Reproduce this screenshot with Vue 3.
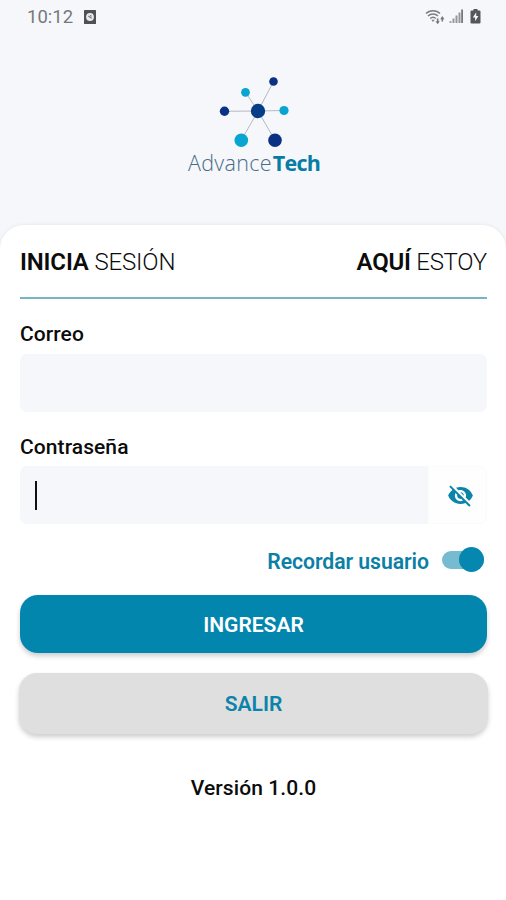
<template>
  <div class="screen">
    <header class="status-bar">
      <div class="status-left">
        <span class="clock">10:12</span>
        <svg class="app-icon" width="12" height="14" viewBox="0 0 12 14">
          <rect width="12" height="14" rx="0.5" fill="#505154" />
          <circle cx="6" cy="7" r="3.9" fill="#e9eaee" />
          <path d="M4.3 6l3.4 2.2M6.2 5.2l1.3 1.2" stroke="#77787b" stroke-width="1.1" />
        </svg>
      </div>
      <div class="status-right">
        <svg width="20" height="16" viewBox="0 0 20 16" fill="none" stroke="#7c7d80" stroke-width="1.5">
          <path d="M1 4.500C4.500 0.700 11.500 0.700 15 4.500" />
          <path d="M3 7C5.700 4.400 10.300 4.400 13 7" />
          <path d="M5.200 9.500c1.600-1.500 4-1.500 5.600 0" />
          <path d="M6.300 10.800h3.400L8 13z" fill="#7c7d80" stroke="none" />
          <path d="M11.900 9.500h1.600v2.700h1.300L12.700 15.300l-2.200-3.100h1.400zM16.500 12.500V10.300h-1.300l2.100-3.300 2.200 3.300h-1.400v2.200z" fill="#77787b" stroke="none" />
        </svg>
        <svg width="15" height="15" viewBox="0 0 15 15">
          <path d="M0.500 12h2v2h-2z" fill="#a4a5a8" />
          <path d="M3.500 9.500h2V14h-2zM6.500 6.500h2V14h-2zM9.500 3.500h2V14h-2z" fill="#97989b" />
          <path d="M12.200 0.500h1.800V14h-1.800z" fill="#77787b" />
        </svg>
        <svg width="11" height="15" viewBox="0 0 11 15">
          <path d="M3.500 0h4v1.500h2q1 0 1 1v11q0 1-1 1h-8q-1 0-1-1v-11q0-1 1-1h2z" fill="#55565a" />
          <path d="M6.200 3.200L2.800 8.500h2.300v3.700L8.400 7H6.200z" fill="#f4f6fb" />
        </svg>
      </div>
    </header>

    <div class="brand">
      <svg class="brand-mark" width="72" height="74" viewBox="0 0 72 74">
        <line
          v-for="node in nodes"
          :key="node.id"
          x1="39"
          y1="36"
          :x2="node.x"
          :y2="node.y"
          stroke="#b6b9c5"
          stroke-width="1"
        />
        <circle v-for="node in nodes" :key="node.id" :cx="node.x" :cy="node.y" :r="node.r" :fill="node.color" />
        <circle cx="39" cy="36" r="7.200" fill="#053d87" />
      </svg>
      <div class="brand-name">Advance<b>Tech</b></div>
    </div>

    <main class="card">
      <div class="tabs">
        <span class="tab tab-login"><b>INICIA</b> SESIÓN</span>
        <span class="tab tab-here"><b>AQUÍ</b> ESTOY</span>
      </div>

      <label class="label label-email" for="email">Correo</label>
      <input id="email" v-model="email" class="input" type="email" />

      <label class="label label-password" for="password">Contraseña</label>
      <div class="password">
        <input id="password" v-model="password" class="input" :type="showPassword ? 'text' : 'password'" />
        <span v-if="!password" class="caret"></span>
        <button class="eye" type="button" @click="showPassword = !showPassword">
          <svg width="27" height="27" viewBox="0 0 24 24" fill="#0a84a9">
            <path
              d="M12 7c2.760 0 5 2.240 5 5 0 .65-.13 1.260-.36 1.830l2.920 2.920c1.510-1.260 2.700-2.890 3.430-4.750-1.730-4.390-6-7.500-11-7.500-1.400 0-2.740.25-3.980.7l2.160 2.160C10.740 7.130 11.350 7 12 7zM2 4.270l2.280 2.280.46.46C3.080 8.300 1.780 10.020 1 12c1.730 4.390 6 7.500 11 7.500 1.550 0 3.030-.3 4.380-.84l.42.42L19.730 22 21 20.730 3.270 3 2 4.270zM7.530 9.800l1.550 1.550c-.05.21-.08.43-.08.65 0 1.660 1.340 3 3 3 .22 0 .44-.03.65-.08l1.550 1.550c-.67.33-1.410.53-2.200.53-2.760 0-5-2.240-5-5 0-.79.2-1.530.53-2.200zm4.310-.78l3.150 3.150.02-.16c0-1.660-1.340-3-3-3l-.17.010z"
            />
          </svg>
        </button>
      </div>

      <div class="remember">
        <span class="remember-text">Recordar usuario</span>
        <button class="switch" :class="{ on: remember }" type="button" @click="remember = !remember">
          <span class="thumb"></span>
        </button>
      </div>

      <button class="btn btn-primary" type="button">INGRESAR</button>
      <button class="btn btn-exit" type="button">SALIR</button>

      <p class="version">Versión 1.0.0</p>
    </main>
  </div>
</template>

<script setup>
import { ref } from "vue";

const email = ref("");
const password = ref("");
const showPassword = ref(false);
const remember = ref(true);

const nodes = [
  { id: 1, x: 54.5, y: 6.5, r: 4.3, color: "#0a3183" },
  { id: 2, x: 26.5, y: 17.3, r: 4.4, color: "#08a5d0" },
  { id: 3, x: 5.5, y: 36.3, r: 4.7, color: "#0a3183" },
  { id: 4, x: 65, y: 35.5, r: 4.6, color: "#08a5d0" },
  { id: 5, x: 22.3, y: 65.3, r: 6.8, color: "#08a5d0" },
  { id: 6, x: 56, y: 65.3, r: 6.8, color: "#0a3183" },
];
</script>

<style>
body {
  margin: 0;
}
</style>

<style scoped>
.screen {
  display: flex;
  flex-direction: column;
  height: 900px;
  background: #f5f7fb;
  color: #0c0c0c;
  font-family: Roboto, "Liberation Sans", sans-serif;
  overflow: hidden;
}

button {
  padding: 0;
  border: none;
  font-family: inherit;
}

/* Status bar */
.status-bar {
  display: flex;
  justify-content: space-between;
  align-items: center;
  height: 33px;
  padding: 0 25px 0 27px;
  box-sizing: border-box;
}

.status-left {
  display: flex;
  align-items: center;
  gap: 11px;
}

.clock {
  padding-top: 1px;
  font-size: 18.5px;
  line-height: 32px;
  color: #77787b;
}

.status-right {
  display: flex;
  align-items: center;
  gap: 4px;
}

.status-right svg:last-child {
  margin-left: 2px;
}

/* Logo */
.brand {
  display: flex;
  flex-direction: column;
  align-items: center;
  height: 192px;
  padding-top: 42px;
  box-sizing: border-box;
}

.brand-mark {
  margin-left: 4px;
}

.brand-name {
  margin: 0 0 0 2px;
  font-family: "Open Sans", sans-serif;
  font-size: 21.5px;
  font-weight: 300;
  line-height: 28px;
  letter-spacing: 0.3px;
  color: #4a6b86;
  white-space: nowrap;
}

.brand-name b {
  margin-left: 1px;
  font-weight: 700;
  letter-spacing: -0.8px;
  color: #087da3;
}

/* Login card */
.card {
  display: flex;
  flex: 1;
  flex-direction: column;
  padding: 0 19px 0 20px;
  border-radius: 24px 24px 0 0;
  background: #fff;
  box-shadow: 0 0 4px rgba(0, 0, 0, 0.08);
}

.tabs {
  display: flex;
  justify-content: space-between;
  height: 74px;
  padding-top: 22px;
  box-sizing: border-box;
  border-bottom: 2px solid #79b4c5;
}

.tab {
  font-size: 24px;
  font-weight: 300;
  line-height: 30px;
  white-space: nowrap;
}

.tab b {
  font-weight: 600;
}

.tab-login {
  letter-spacing: -0.15px;
}

.tab-here {
  letter-spacing: -0.25px;
}

.label {
  font-size: 21px;
  font-weight: 550;
  line-height: 26px;
  letter-spacing: 0.08px;
}

.label-email {
  margin: 22px 0 7px;
}

.label-password {
  margin: 22px 0 6px;
}

.input {
  width: 100%;
  height: 58px;
  padding: 0 15px;
  box-sizing: border-box;
  border: none;
  border-radius: 7px;
  outline: none;
  background: #f5f7fb;
  font-family: inherit;
  font-size: 21px;
}

.password {
  position: relative;
  display: flex;
  height: 58px;
}

.password .input {
  flex: 1;
  width: auto;
  border-radius: 7px 0 0 7px;
}

.caret {
  position: absolute;
  top: 15px;
  left: 15px;
  width: 2px;
  height: 29px;
  background: #111;
}

.eye {
  display: flex;
  align-items: center;
  justify-content: center;
  width: 59px;
  padding-left: 5px;
  border: 1px solid #fafbfc;
  border-radius: 0 7px 7px 0;
  background: #fefefe;
}

.remember {
  display: flex;
  align-items: center;
  justify-content: flex-end;
  gap: 13px;
  height: 71px;
  padding-right: 3px;
  font-size: 21.2px;
  font-weight: 600;
  color: #0b7fa5;
}

.remember-text {
  padding-top: 3px;
  letter-spacing: -0.05px;
}

.switch {
  display: flex;
  align-items: center;
  width: 42px;
  height: 18px;
  border-radius: 9px;
  background: #c4c8cc;
}

.switch.on {
  justify-content: flex-end;
  background: #76bbcf;
}

.thumb {
  width: 25px;
  height: 25px;
  flex: none;
  border-radius: 50%;
  background: #0587af;
}

.btn {
  flex: none;
  height: 58px;
  border-radius: 18px;
  font-size: 21px;
  font-weight: 600;
  box-shadow: 0 3px 5px rgba(0, 0, 0, 0.2);
}

.btn-primary {
  padding-top: 2px;
  background: #0286ae;
  color: #fff;
}

.btn-exit {
  height: 61px;
  margin: 20px -1px 0;
  background: #dfdfdf;
  color: #0b83aa;
}

.version {
  margin: 41px 0 0;
  font-size: 21px;
  font-weight: 550;
  line-height: 26px;
  letter-spacing: 0.1px;
  text-align: center;
}
</style>
